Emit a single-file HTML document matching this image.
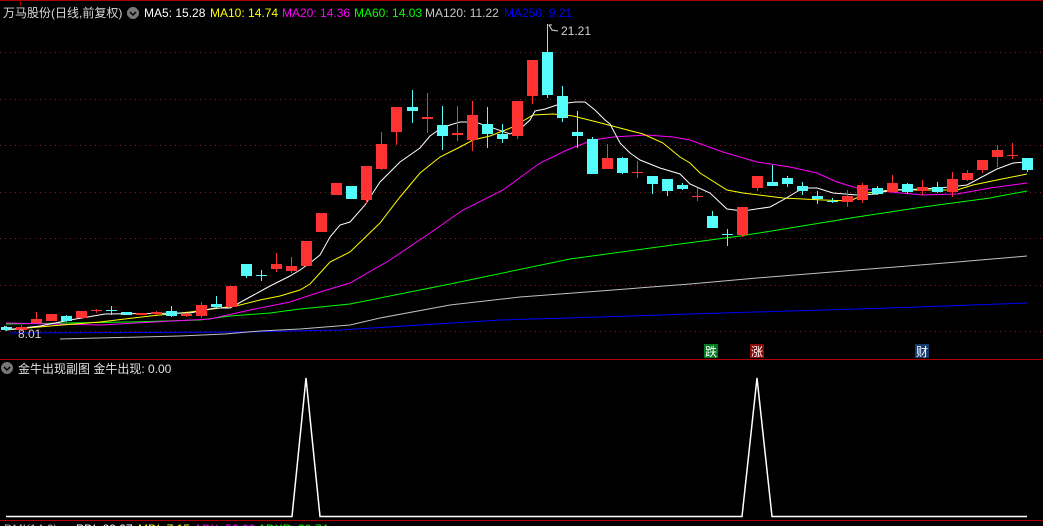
<!DOCTYPE html>
<html><head><meta charset="utf-8"><style>
html,body{margin:0;padding:0;background:#000;width:1043px;height:526px;overflow:hidden}
svg{display:block}
text{font-family:"Liberation Sans","Noto Sans CJK SC",sans-serif;font-size:12px}
</style></head><body>
<svg width="1043" height="526" viewBox="0 0 1043 526" xmlns="http://www.w3.org/2000/svg" shape-rendering="crispEdges">
<rect width="1043" height="526" fill="#000"/>
<line x1="0" y1="0.5" x2="1043" y2="0.5" stroke="#a00000"/>
<line x1="20.5" y1="0" x2="20.5" y2="6" stroke="#a00000"/>
<g stroke="#8b1a1a" stroke-dasharray="1,4">
<line x1="0" y1="52.5" x2="1043" y2="52.5"/><line x1="0" y1="99.5" x2="1043" y2="99.5"/>
<line x1="0" y1="145.5" x2="1043" y2="145.5"/><line x1="0" y1="192.5" x2="1043" y2="192.5"/>
<line x1="0" y1="238.5" x2="1043" y2="238.5"/><line x1="0" y1="285.5" x2="1043" y2="285.5"/>
<line x1="0" y1="331.5" x2="1043" y2="331.5"/>
</g>
<line x1="0" y1="359.5" x2="1043" y2="359.5" stroke="#b00000"/>
<line x1="0" y1="520.5" x2="1043" y2="520.5" stroke="#b00000"/>

<g fill="none" stroke-width="1" shape-rendering="auto">
<polyline stroke="#0000ff" points="10,333 240,332 340,330 500,320 600,317 690,314 790,311 890,308 1027,303"/>
<polyline stroke="#c0c0c0" points="60,339 180,336 225,334 260,331 300,329 350,325 380,318 450,305 520,297 600,291 690,284 757,278 857,270 957,262 1027,256"/>
<polyline stroke="#00ff00" points="6,324 130,322 200,320 230,316 270,313 300,309 350,304 450,284 570,259 710,240 740,236 790,228 857,217 923,207 990,198 1027,191"/>
<polyline stroke="#ff00ff" points="6,323 100,325 210,319 250,310 290,302 320,292 350,283 390,260 430,233 463,210 503,190 540,163 567,150 593,140 613,137 647,135 673,137 690,140 723,152 757,162 790,167 817,173 837,182 857,188 890,192 923,195 957,194 990,188 1027,183"/>
<polyline stroke="#ffff00" points="6,330 50,326 100,322 150,316 190,312 220,308 240,305 260,300 280,296 300,290 310,284 320,273 330,262 350,252 380,223 400,197 420,173 440,157 460,147 473,140 490,136 513,127 533,115 553,114 573,116 597,122 620,128 643,134 663,143 680,157 690,163 700,173 727,190 743,193 783,198 823,200 850,201 867,193 890,190 957,190 973,185 997,180 1027,174"/>
<polyline stroke="#ffffff" points="5,330 40,326 70,320 105,314 190,313 215,308 230,308 250,297 270,286 290,276 300,270 310,263 320,255 330,237 340,225 350,222 365,205 380,182 400,162 420,148 430,136 440,129 450,125 460,122 475,122 490,127 510,134 520,129 530,120 535,111 545,109 560,104 575,102 585,102 595,110 605,120 610,124 620,143 630,153 640,160 660,168 680,174 690,184 710,193 727,209 743,211 770,207 783,200 803,188 817,188 833,193 857,195 877,194 890,190 923,189 950,187 967,185 980,178 997,169 1013,163 1027,162"/>
</g>

<g id="c">
<!-- candles: wick then body -->
<g stroke="#54fcfc" fill="#54fcfc">
<line x1="6.5" y1="326" x2="6.5" y2="331"/><rect x="1" y="327" width="11" height="3" stroke="none"/>
<line x1="66.5" y1="315" x2="66.5" y2="322"/><rect x="61" y="316" width="11" height="5" stroke="none"/>
<line x1="111.5" y1="306" x2="111.5" y2="315"/><rect x="106" y="310" width="11" height="1" stroke="none"/>
<rect x="121" y="312" width="11" height="3" stroke="none"/>
<line x1="171.5" y1="306" x2="171.5" y2="317"/><rect x="166" y="311" width="11" height="5" stroke="none"/>
<line x1="216.5" y1="296" x2="216.5" y2="308"/><rect x="211" y="304" width="11" height="3" stroke="none"/>
<line x1="246.5" y1="264" x2="246.5" y2="278"/><rect x="241" y="264" width="11" height="12" stroke="none"/>
<line x1="261.5" y1="270" x2="261.5" y2="281"/><rect x="256" y="275" width="11" height="1" stroke="none"/>
<rect x="346" y="186" width="11" height="13" stroke="none"/>
<line x1="412.5" y1="90" x2="412.5" y2="123"/><rect x="407" y="107" width="11" height="4" stroke="none"/>
<line x1="442.5" y1="106" x2="442.5" y2="150"/><rect x="437" y="125" width="11" height="11" stroke="none"/>
<line x1="487.5" y1="107" x2="487.5" y2="148"/><rect x="482" y="124" width="11" height="10" stroke="none"/>
<line x1="502.5" y1="124" x2="502.5" y2="143"/><rect x="497" y="134" width="11" height="5" stroke="none"/>
<line x1="547.5" y1="24" x2="547.5" y2="98"/><rect x="542" y="52" width="11" height="43" stroke="none"/>
<line x1="562.5" y1="86" x2="562.5" y2="122"/><rect x="557" y="96" width="11" height="22" stroke="none"/>
<line x1="577.5" y1="111" x2="577.5" y2="148"/><rect x="572" y="132" width="11" height="4" stroke="none"/>
<line x1="592.5" y1="137" x2="592.5" y2="174"/><rect x="587" y="139" width="11" height="35" stroke="none"/>
<line x1="622.5" y1="157" x2="622.5" y2="174"/><rect x="617" y="158" width="11" height="15" stroke="none"/>
<line x1="652.5" y1="176" x2="652.5" y2="194"/><rect x="647" y="176" width="11" height="8" stroke="none"/>
<line x1="667.5" y1="179" x2="667.5" y2="196"/><rect x="662" y="179" width="11" height="12" stroke="none"/>
<line x1="682.5" y1="183" x2="682.5" y2="190"/><rect x="677" y="185" width="11" height="4" stroke="none"/>
<line x1="712.5" y1="211" x2="712.5" y2="228"/><rect x="707" y="216" width="11" height="12" stroke="none"/>
<line x1="727.5" y1="229" x2="727.5" y2="246"/><rect x="722" y="234" width="11" height="1" stroke="none"/>
<line x1="772.5" y1="165" x2="772.5" y2="186"/><rect x="767" y="182" width="11" height="4" stroke="none"/>
<line x1="787.5" y1="176" x2="787.5" y2="187"/><rect x="782" y="178" width="11" height="6" stroke="none"/>
<line x1="802.5" y1="182" x2="802.5" y2="195"/><rect x="797" y="186" width="11" height="5" stroke="none"/>
<line x1="817.5" y1="191" x2="817.5" y2="204"/><rect x="812" y="196" width="11" height="3" stroke="none"/>
<line x1="832.5" y1="198" x2="832.5" y2="203"/><rect x="827" y="201" width="11" height="1" stroke="none"/>
<line x1="877.5" y1="186" x2="877.5" y2="195"/><rect x="872" y="188" width="11" height="6" stroke="none"/>
<line x1="907.5" y1="183" x2="907.5" y2="194"/><rect x="902" y="184" width="11" height="8" stroke="none"/>
<line x1="937.5" y1="182" x2="937.5" y2="193"/><rect x="932" y="187" width="11" height="5" stroke="none"/>
<line x1="1027.5" y1="158" x2="1027.5" y2="172"/><rect x="1022" y="158" width="11" height="12" stroke="none"/>
</g>
<g stroke="#ff3232" fill="#ff3232">
<line x1="21.5" y1="325" x2="21.5" y2="331"/><rect x="16" y="327" width="11" height="3" stroke="none"/>
<line x1="36.5" y1="312" x2="36.5" y2="323"/><rect x="31" y="319" width="11" height="4" stroke="none"/>
<rect x="46" y="314" width="11" height="7" stroke="none"/>
<rect x="76" y="311" width="11" height="7" stroke="none"/>
<line x1="96.5" y1="309" x2="96.5" y2="313"/><rect x="91" y="310" width="11" height="1" stroke="none"/>
<rect x="136" y="313" width="11" height="2" stroke="none"/>
<line x1="156.5" y1="311" x2="156.5" y2="315"/><rect x="151" y="312" width="11" height="2" stroke="none"/>
<line x1="186.5" y1="313" x2="186.5" y2="317"/><rect x="181" y="314" width="11" height="2" stroke="none"/>
<line x1="201.5" y1="302" x2="201.5" y2="318"/><rect x="196" y="305" width="11" height="11" stroke="none"/>
<rect x="226" y="286" width="11" height="21" stroke="none"/>
<line x1="276.5" y1="253" x2="276.5" y2="272"/><rect x="271" y="264" width="11" height="5" stroke="none"/>
<line x1="291.5" y1="257" x2="291.5" y2="273"/><rect x="286" y="266" width="11" height="5" stroke="none"/>
<rect x="301" y="241" width="11" height="25" stroke="none"/>
<rect x="316" y="213" width="11" height="19" stroke="none"/>
<rect x="331" y="183" width="11" height="12" stroke="none"/>
<line x1="366.5" y1="166" x2="366.5" y2="203"/><rect x="361" y="166" width="11" height="34" stroke="none"/>
<line x1="381.5" y1="132" x2="381.5" y2="170"/><rect x="376" y="144" width="11" height="25" stroke="none"/>
<line x1="396.5" y1="107" x2="396.5" y2="145"/><rect x="391" y="107" width="11" height="25" stroke="none"/>
<line x1="427.5" y1="93" x2="427.5" y2="133"/><rect x="422" y="117" width="11" height="2" stroke="none"/>
<line x1="457.5" y1="106" x2="457.5" y2="141"/><rect x="452" y="133" width="11" height="2" stroke="none"/>
<line x1="472.5" y1="101" x2="472.5" y2="151"/><rect x="467" y="115" width="11" height="25" stroke="none"/>
<line x1="517.5" y1="101" x2="517.5" y2="139"/><rect x="512" y="101" width="11" height="35" stroke="none"/>
<line x1="532.5" y1="60" x2="532.5" y2="104"/><rect x="527" y="60" width="11" height="36" stroke="none"/>
<line x1="607.5" y1="144" x2="607.5" y2="169"/><rect x="602" y="158" width="11" height="11" stroke="none"/>
<line x1="637.5" y1="161" x2="637.5" y2="178"/><rect x="632" y="172" width="11" height="1" stroke="none"/>
<line x1="697.5" y1="188" x2="697.5" y2="201"/><rect x="692" y="196" width="11" height="1" stroke="none"/>
<line x1="742.5" y1="207" x2="742.5" y2="237"/><rect x="737" y="207" width="11" height="28" stroke="none"/>
<line x1="757.5" y1="176" x2="757.5" y2="191"/><rect x="752" y="176" width="11" height="12" stroke="none"/>
<line x1="847.5" y1="190" x2="847.5" y2="207"/><rect x="842" y="196" width="11" height="6" stroke="none"/>
<line x1="862.5" y1="183" x2="862.5" y2="203"/><rect x="857" y="185" width="11" height="15" stroke="none"/>
<line x1="892.5" y1="175" x2="892.5" y2="192"/><rect x="887" y="183" width="11" height="9" stroke="none"/>
<line x1="922.5" y1="180" x2="922.5" y2="195"/><rect x="917" y="187" width="11" height="4" stroke="none"/>
<line x1="952.5" y1="172" x2="952.5" y2="197"/><rect x="947" y="179" width="11" height="13" stroke="none"/>
<line x1="967.5" y1="170" x2="967.5" y2="181"/><rect x="962" y="173" width="11" height="7" stroke="none"/>
<line x1="982.5" y1="160" x2="982.5" y2="173"/><rect x="977" y="160" width="11" height="10" stroke="none"/>
<line x1="997.5" y1="145" x2="997.5" y2="167"/><rect x="992" y="150" width="11" height="7" stroke="none"/>
<line x1="1012.5" y1="143" x2="1012.5" y2="159"/><rect x="1007" y="155" width="11" height="1" stroke="none"/>
</g>
</g>

<!-- 21.21 marker -->
<path d="M548.5 25 H552 M549 25 L552 30 L558 31" stroke="#ddd" fill="none" shape-rendering="auto"/>
<text x="561" y="35" fill="#d0d0d0">21.21</text>
<path d="M4 326 L10 330" stroke="#ddd" fill="none" shape-rendering="auto"/>
<text x="18" y="338" fill="#d0d0d0">8.01</text>

<!-- header -->
<text x="3" y="17" fill="#d8d8d8" font-size="13">万马股份(日线,前复权)</text>
<circle cx="133" cy="13" r="6" fill="#777"/>
<path d="M130 12 L133 15 L136 12" stroke="#000" stroke-width="1.5" fill="none" shape-rendering="auto"/>
<text x="144" y="17" fill="#ffffff">MA5: 15.28</text>
<text x="210" y="17" fill="#ffff00">MA10: 14.74</text>
<text x="282" y="17" fill="#ff00ff">MA20: 14.36</text>
<text x="354" y="17" fill="#00ff00">MA60: 14.03</text>
<text x="425" y="17" fill="#c8c8c8">MA120: 11.22</text>
<text x="504" y="17" fill="#0000ff">MA250: 9.21</text>

<!-- markers -->
<rect x="704" y="344" width="14" height="14" fill="#007a20"/>
<text x="705" y="356" fill="#fff" font-size="12">跌</text>
<rect x="750" y="344" width="14" height="14" fill="#8a0a0a"/>
<text x="751" y="356" fill="#fff" font-size="12">涨</text>
<rect x="915" y="344" width="14" height="14" fill="#163a6a"/>
<text x="916" y="356" fill="#fff" font-size="12">财</text>

<!-- sub pane -->
<circle cx="7" cy="368" r="6" fill="#777"/>
<path d="M4 367 L7 370 L10 367" stroke="#000" stroke-width="1.5" fill="none" shape-rendering="auto"/>
<text x="18" y="373" fill="#e0e0e0">金牛出现副图 金牛出现: 0.00</text>
<polyline fill="none" stroke="#fff" stroke-width="1.5" shape-rendering="auto" points="6,516.5 292,516.5 306,378 320,516.5 742,516.5 757,378 772,516.5 1027,516.5"/>

<text x="4" y="533" fill="#bbb">DMI(14,6)</text>
<text x="76" y="533" fill="#fff">PDI: 29.97</text>
<text x="138" y="533" fill="#ffff00">MDI: 7.15</text>
<text x="194" y="533" fill="#ff00ff">ADX: 50.00</text>
<text x="258" y="533" fill="#00ff00">ADXR: 30.74</text>
</svg>
</body></html>
